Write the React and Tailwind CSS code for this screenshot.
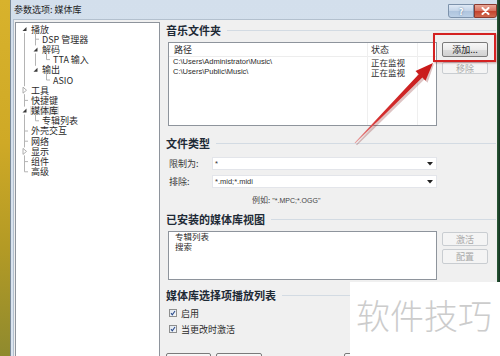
import React from "react";

const treeRows = [
  { label: "播放", level: 0, exp: "open" },
  { label: "DSP 管理器", level: 1 },
  { label: "解码", level: 1, exp: "open" },
  { label: "TTA 输入", level: 2 },
  { label: "输出", level: 1, exp: "open" },
  { label: "ASIO", level: 2 },
  { label: "工具", level: 0, exp: "closed" },
  { label: "快捷键", level: 0 },
  { label: "媒体库", level: 0, exp: "open", selected: true },
  { label: "专辑列表", level: 1 },
  { label: "外壳交互", level: 0 },
  { label: "网络", level: 0 },
  { label: "显示", level: 0, exp: "closed" },
  { label: "组件", level: 0 },
  { label: "高级", level: 0 },
];

const levelPad = ["pl-[14px]", "pl-[25px]", "pl-[36px]"];

const cy = (i) => 29 + 10.2 * i;

function TreeLines() {
  const lc = "#b4b4b4";
  const segs = [
    [24.5, 33, 24.5, cy(6) - 4],
    [24.5, cy(6) + 4, 24.5, cy(8) - 4],
    [24.5, cy(8) + 4, 24.5, cy(12) - 4],
    [24.5, cy(12) + 4, 24.5, cy(14)],
    ...[7, 10, 11, 13, 14].map((i) => [24.5, cy(i), 28, cy(i)]),
    [35.5, 33, 35.5, cy(2) - 4],
    [35.5, cy(2) + 4, 35.5, cy(4) - 4],
    [35.5, cy(1), 39, cy(1)],
    [35.5, cy(8) + 4, 35.5, cy(9)],
    [35.5, cy(9), 39, cy(9)],
    [46.5, cy(2) + 4, 46.5, cy(3)],
    [46.5, cy(3), 50, cy(3)],
    [46.5, cy(4) + 4, 46.5, cy(5)],
    [46.5, cy(5), 50, cy(5)],
  ];
  const open = (x, y) => `${x + 2},${y - 2} ${x + 2},${y + 2} ${x - 2},${y + 2}`;
  const closed = (x, y) => `${x - 1.5},${y - 3} ${x - 1.5},${y + 3} ${x + 2},${y}`;
  return (
    <svg
      className="absolute left-0 top-0 pointer-events-none"
      width="144"
      height="333"
      viewBox="16 23 144 333"
    >
      {segs.map((s, k) => (
        <line key={k} x1={s[0]} y1={s[1]} x2={s[2]} y2={s[3]} stroke={lc} strokeWidth="1" />
      ))}
      <polygon points={open(24.5, cy(0))} fill="#3a3a3a" />
      <polygon points={open(35.5, cy(2))} fill="#3a3a3a" />
      <polygon points={open(35.5, cy(4))} fill="#3a3a3a" />
      <polygon points={open(24.5, cy(8))} fill="#3a3a3a" />
      <polygon points={closed(24.5, cy(6))} fill="none" stroke="#9a9a9a" strokeWidth="0.8" />
      <polygon points={closed(24.5, cy(12))} fill="none" stroke="#9a9a9a" strokeWidth="0.8" />
    </svg>
  );
}

function Header({ children, className = "" }) {
  return (
    <div className={"flex items-center h-[20px] pr-[1px] " + className}>
      <span className="text-[11px] font-bold leading-none text-[#1e2a36]">{children}</span>
      <div className="flex-1 ml-[6px] h-px bg-[#d3dbe3]" />
    </div>
  );
}

function Btn({ children, disabled, className = "" }) {
  return (
    <div
      className={
        "flex items-center justify-center border rounded-[2px] text-[9px] leading-none " +
        (disabled
          ? "border-[#c9cdd1] bg-[#f4f4f4] text-[#a8a8a8] "
          : "border-[#7a7a7a] bg-[linear-gradient(180deg,#f7f7f7_0%,#ebebeb_50%,#dddddd_51%,#d1d1d1_100%)] text-[#1e1e1e] ") +
        className
      }
    >
      {children}
    </div>
  );
}

function Check() {
  return (
    <svg width="8" height="8" viewBox="0 0 8 8" className="shrink-0">
      <defs>
        <linearGradient id="cb" x1="0" y1="0" x2="1" y2="1">
          <stop offset="0" stopColor="#dfe6ee" />
          <stop offset="1" stopColor="#f6f8fa" />
        </linearGradient>
      </defs>
      <rect x="0.5" y="0.5" width="7" height="7" fill="url(#cb)" stroke="#8e8f8f" />
      <path d="M2 4.2 L3.3 5.8 L6 2" fill="none" stroke="#2b4a8c" strokeWidth="1.1" />
    </svg>
  );
}

function Combo({ value }) {
  return (
    <div className="w-[225px] h-[13px] bg-white border border-[#e3e5ea] flex items-center pl-[2px] pr-[3px]">
      <span className="flex-1 text-[7.5px] font-['Liberation_Sans',sans-serif] text-[#333] leading-none">{value}</span>
      <svg width="6" height="4" viewBox="0 0 6 4">
        <polygon points="0,0 6,0 3,3.5" fill="#222" />
      </svg>
    </div>
  );
}

export default function App() {
  return (
    <div className="relative w-[500px] h-[356px] overflow-hidden flex font-['Noto_Sans_CJK_SC',sans-serif] text-[#2a2a2a] bg-[linear-gradient(180deg,#d8b22c_0%,#cfa926_40%,#b39a25_70%,#8f8a2e_100%)]">
      <div className="w-[10px] shrink-0" />
      <div className="w-[487px] shrink-0 flex flex-col border-l border-[#7b8a99] bg-[linear-gradient(180deg,#d3dfec_0%,#dbe5f0_100%)]">
        <div className="h-[19px] shrink-0 flex items-start">
          <span className="pl-[3px] pt-[4px] text-[9px] leading-[12px] text-[#1e1e1e]">参数选项: 媒体库</span>
          <div className="ml-auto mt-[4px] flex">
            <div className="w-[26px] h-[14px] border border-[#7d92ab] rounded-bl-[3px] bg-[linear-gradient(180deg,#dfe9f5_0%,#c3d4e8_50%,#aec4de_51%,#bcd0e6_100%)] flex items-center justify-center text-[9px] font-bold text-white leading-none [text-shadow:0_0_2px_#4a6a90]">
              ?
            </div>
            <div className="w-[23px] h-[14px] border border-[#8a3a30] rounded-br-[3px] bg-[linear-gradient(180deg,#e9a898_0%,#d7715f_50%,#c4412c_51%,#d06a50_100%)] flex items-center justify-center">
              <svg width="9" height="8" viewBox="0 0 9 8">
                <path d="M1.5 1 L7.5 7 M7.5 1 L1.5 7" stroke="#fff" strokeWidth="2" strokeLinecap="round" />
              </svg>
            </div>
          </div>
        </div>
        <div className="flex-1 ml-[2px] flex bg-[#f0f0f0] border-l border-t border-[#b3c0ce]">
          <div className="relative ml-[1px] mt-[2px] w-[145px] shrink-0 bg-white border-l border-t border-r border-[#8e949c] pt-[1px]">
            <TreeLines />
            {treeRows.map((r, i) => (
              <div key={i} className={"h-[10.2px] flex items-center " + levelPad[r.level]}>
                <span
                  className={
                    "text-[9px] leading-[9px] px-[1px] " +
                    (r.selected ? "bg-[#e6e6e6]" : "")
                  }
                >
                  {r.label}
                </span>
              </div>
            ))}
          </div>

          <div className="flex-1 flex flex-col pl-[6px]">
            <Header>音乐文件夹</Header>
            <div className="flex mt-[2px] h-[84px] shrink-0">
              <div className="ml-[2px] w-[269px] bg-white border border-[#8e949c] flex">
                <div className="w-[199px] border-r border-[#efefef] flex flex-col">
                  <div className="h-[14px] border-b border-[#ededed] flex items-center pl-[5px] text-[9px] leading-none">路径</div>
                  <div className="h-[10px] flex items-center pl-[4px] text-[7.5px] leading-none font-['Liberation_Sans',sans-serif]">C:\Users\Administrator\Music\</div>
                  <div className="h-[10px] flex items-center pl-[4px] text-[7.5px] leading-none font-['Liberation_Sans',sans-serif]">C:\Users\Public\Music\</div>
                </div>
                <div className="w-[50px] border-r border-[#efefef] flex flex-col">
                  <div className="h-[14px] border-b border-[#ededed] flex items-center pl-[3px] text-[9px] leading-none">状态</div>
                  <div className="h-[10px] flex items-center pl-[3px] text-[8.5px] leading-[9px]">正在监视</div>
                  <div className="h-[10px] flex items-center pl-[3px] text-[8.5px] leading-[9px]">正在监视</div>
                </div>
                <div className="flex-1 flex flex-col">
                  <div className="h-[14px] border-b border-[#ededed]" />
                </div>
              </div>
              <div className="ml-[5px] flex flex-col">
                <div className="relative">
                  <Btn className="w-[46px] h-[15px]">添加...</Btn>
                  <div className="absolute left-[-9px] top-[-9px] w-[63px] h-[29px] border-2 border-[#d42222] shadow-[1px_1px_2px_rgba(120,0,0,0.35)] pointer-events-none" />
                </div>
                <Btn disabled className="w-[46px] h-[12px] mt-[5px]">移除</Btn>
              </div>
            </div>

            <Header className="mt-[7px]">文件类型</Header>
            <div className="flex items-center mt-[4px] pl-[3px]">
              <span className="w-[43px] text-[9px] leading-none text-[#3a3a3a]">限制为:</span>
              <Combo value="*" />
            </div>
            <div className="flex items-center mt-[5px] pl-[3px]">
              <span className="w-[43px] text-[9px] leading-none text-[#3a3a3a]">排除:</span>
              <Combo value="*.mid;*.midi" />
            </div>
            <div className="mt-[6px] h-[12px] flex items-center pl-[86px] text-[8px] leading-none text-[#444]">
              <span>例如: </span>
              <span className="font-['Liberation_Sans',sans-serif] text-[7px] ml-[2px]">"*.MPC;*.OGG"</span>
            </div>

            <Header className="mt-[3px]">已安装的媒体库视图</Header>
            <div className="flex mt-[2px] h-[49px] shrink-0">
              <div className="ml-[2px] w-[269px] bg-white border border-[#8e949c] pl-[6px] flex flex-col">
                <div className="h-[10px] mt-[-1px] flex items-center text-[8.5px] leading-[9px]">专辑列表</div>
                <div className="h-[10px] flex items-center text-[8.5px] leading-[9px]">搜索</div>
              </div>
              <div className="ml-[5px] flex flex-col mt-[1px]">
                <Btn disabled className="w-[46px] h-[14px]">激活</Btn>
                <Btn disabled className="w-[46px] h-[15px] mt-[3px] text-[#8a8a8a]">配置</Btn>
              </div>
            </div>

            <Header className="mt-[5px]">媒体库选择项播放列表</Header>
            <div className="mt-[2px] h-[12px] flex items-center pl-[3px] gap-[4px]">
              <Check />
              <span className="text-[9px] leading-none">启用</span>
            </div>
            <div className="mt-[4px] h-[12px] flex items-center pl-[3px] gap-[4px]">
              <Check />
              <span className="text-[9px] leading-none">当更改时激活</span>
            </div>
            <div className="mt-[18px] flex">
              <Btn className="w-[45px] h-[20px]"> </Btn>
              <Btn className="w-[46px] h-[20px] ml-[5px]"> </Btn>
              <Btn className="w-[46px] h-[20px] ml-[82px]"> </Btn>
            </div>
          </div>
        </div>
      </div>
      <div className="flex-1 bg-[linear-gradient(90deg,#2a5a36_0%,#123020_100%)]" />

      <svg className="absolute left-0 top-0 pointer-events-none" width="500" height="356" viewBox="0 0 500 356">
        <defs>
          <linearGradient id="ar" x1="355" y1="143" x2="433" y2="63" gradientUnits="userSpaceOnUse">
            <stop offset="0" stopColor="#e8a0a0" />
            <stop offset="0.3" stopColor="#d43030" />
            <stop offset="1" stopColor="#c81818" />
          </linearGradient>
        </defs>
        <polygon
          points="356,144.5 420.7,76.2 417.5,73 434,64 427.5,82.8 424.3,79.6 357,145.3"
          fill="#7a1010"
          opacity="0.25"
        />
        <polygon
          points="354.6,142.7 418.7,74.2 415.5,71 433,63 425.5,80.8 422.3,77.6 355.4,143.3"
          fill="url(#ar)"
        />
      </svg>

      <div className="absolute left-[350px] top-[282px] w-[150px] h-[74px] bg-white pl-[6px] pt-[16px]">
        <span className="block text-[34px] leading-none font-light text-[#cccccc] whitespace-nowrap">软件技巧</span>
      </div>
    </div>
  );
}
